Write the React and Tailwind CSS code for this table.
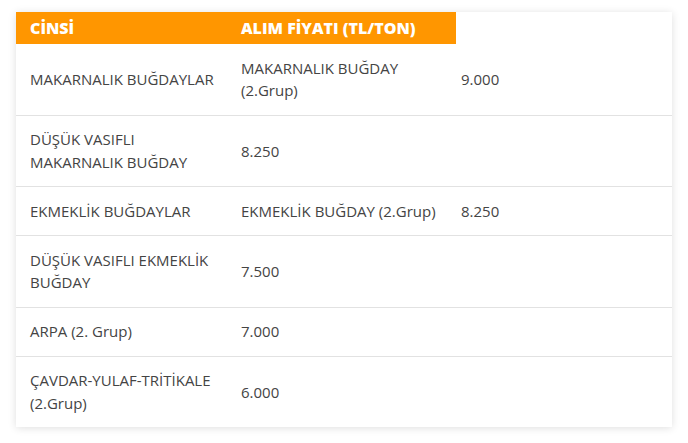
import React from "react";

const rows = [
  [["MAKARNALIK BUĞDAYLAR"], ["MAKARNALIK BUĞDAY", "(2.Grup)"], "9.000"],
  [["DÜŞÜK VASIFLI", "MAKARNALIK BUĞDAY"], ["8.250"], ""],
  [["EKMEKLİK BUĞDAYLAR"], ["EKMEKLİK BUĞDAY (2.Grup)"], "8.250"],
  [["DÜŞÜK VASIFLI EKMEKLİK", "BUĞDAY"], ["7.500"], ""],
  [["ARPA (2. Grup)"], ["7.000"], ""],
  [["ÇAVDAR-YULAF-TRİTİKALE", "(2.Grup)"], ["6.000"], ""],
];

function Lines({ lines }) {
  return lines.map((l, i) => (
    <React.Fragment key={i}>
      {i > 0 && <br />}
      {l}
    </React.Fragment>
  ));
}

export default function App() {
  return (
    <div className="w-[688px] h-[443px] bg-white pt-3 px-4" style={{ fontFamily: '"Open Sans", sans-serif' }}>
      <div className="bg-white shadow-[0_1px_8px_rgba(0,0,0,0.13)]">
        <table className="w-full table-fixed border-collapse text-[15px] text-[#444]">
          <colgroup>
            <col className="w-[216px]" />
            <col className="w-[224px]" />
            <col />
          </colgroup>
          <thead>
            <tr className="h-[32px]">
              <th className="bg-[#ff9600] text-white text-[16px] font-extrabold text-left pl-[14px] leading-[20px]">CİNSİ</th>
              <th className="bg-[#ff9600] text-white text-[16px] font-extrabold text-left pl-[9px] leading-[20px] whitespace-nowrap">ALIM FİYATI (TL/TON)</th>
              <th></th>
            </tr>
          </thead>
          <tbody>
            {rows.map((r, i) => (
              <tr key={i} className={i < rows.length - 1 ? "border-b border-[#e2e2e2]" : ""}>
                <td className="pl-[14px] py-[12.75px] leading-[22.5px] align-middle whitespace-nowrap">
                  <Lines lines={r[0]} />
                </td>
                <td className="pl-[9px] py-[12.75px] leading-[22.5px] align-middle whitespace-nowrap">
                  <Lines lines={r[1]} />
                </td>
                <td className="pl-[5px] py-[12.75px] leading-[22.5px] align-middle whitespace-nowrap">{r[2]}</td>
              </tr>
            ))}
          </tbody>
        </table>
      </div>
    </div>
  );
}
